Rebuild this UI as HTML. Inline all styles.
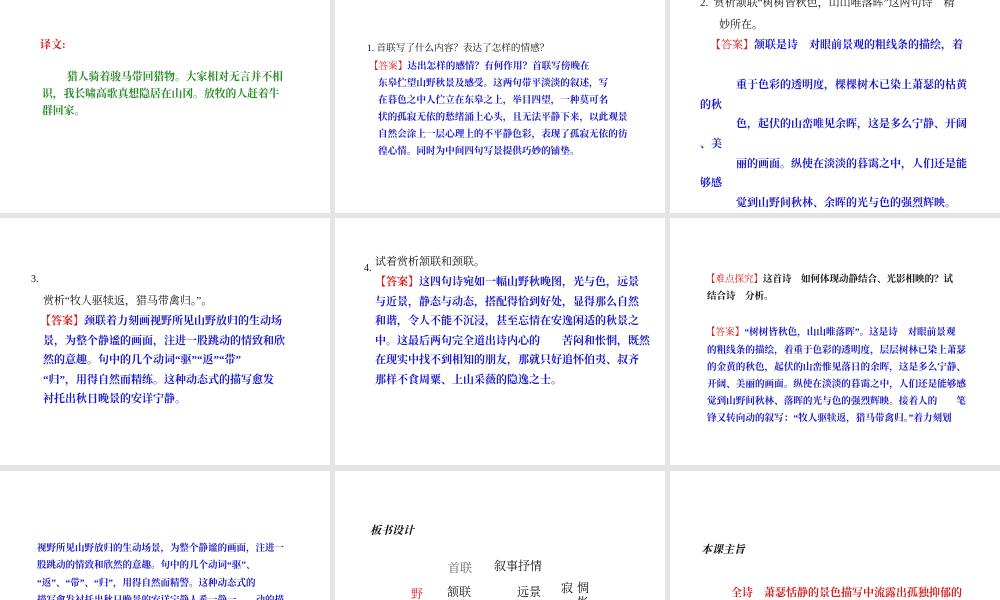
<!DOCTYPE html>
<html><head><meta charset="utf-8"><style>
*{margin:0;padding:0}
body{width:1000px;height:600px;background:#e4e4e4;position:relative;overflow:hidden;font-family:"Liberation Serif","Noto Serif CJK SC","Noto Sans CJK SC",serif;}
.p{position:absolute;background:#fff;overflow:hidden}
.t{position:absolute;white-space:nowrap}
.b{color:#1a1acc;font-weight:bold}
.r{color:#d42020}
.k{color:#111;font-weight:bold}
.g{color:#2a8a2a;font-weight:bold}
</style></head><body>
<!-- row 1 -->
<div class="p" style="left:0;top:0;width:330px;height:213px">
<div class="t r" style="left:40px;top:36px;font-size:11px;font-weight:bold">译文:</div>
<div class="t g" style="left:67px;top:69px;font-size:10.8px">猎人骑着骏马带回猎物。大家相对无言并不相</div>
<div class="t g" style="left:42px;top:86px;font-size:10.8px">识，我长啸高歌真想隐居在山冈。放牧的人赶着牛</div>
<div class="t g" style="left:42px;top:103px;font-size:10.8px">群回家。</div>
</div>
<div class="p" style="left:335px;top:0;width:330px;height:213px">
<div class="t k" style="left:32px;top:40px;font-size:9.6px;font-weight:normal">1. 首联写了什么内容？表达了怎样的情感？</div>
<div class="t b" style="left:34px;top:58px;font-size:9.6px"><span class="r" style="font-weight:normal">【答案】</span>达出怎样的感情？有何作用？首联写傍晚在</div>
<div class="t b" style="left:43px;top:75px;font-size:9.6px">东皋伫望山野秋景及感受。这两句带平淡淡的叙述，写</div>
<div class="t b" style="left:43px;top:92px;font-size:9.6px">在暮色之中人伫立在东皋之上，举目四望，一种莫可名</div>
<div class="t b" style="left:43px;top:109px;font-size:9.6px">状的孤寂无依的愁绪涌上心头，且无法平静下来，以此观景</div>
<div class="t b" style="left:43px;top:126px;font-size:9.6px">自然会涂上一层心理上的不平静色彩，表现了孤寂无依的彷</div>
<div class="t b" style="left:43px;top:143px;font-size:9.6px">徨心情。同时为中间四句写景提供巧妙的铺垫。</div>
</div>
<div class="p" style="left:670px;top:0;width:330px;height:213px">
<div class="t k" style="left:30px;top:-6px;font-size:11px;font-weight:normal">2.&nbsp; 赏析颔联“树树皆秋色，山山唯落晖”这两句诗　精</div>
<div class="t k" style="left:49px;top:16px;font-size:11px;font-weight:normal">妙所在。</div>
<div class="t b" style="left:40px;top:36px;font-size:11px"><span class="r" style="font-weight:normal">【答案】</span>颔联是诗　对眼前景观的粗线条的描绘，着</div>
<div class="t b" style="left:66px;top:76px;font-size:11px">重于色彩的透明度，棵棵树木已染上萧瑟的枯黄</div>
<div class="t b" style="left:30px;top:96px;font-size:11px">的秋</div>
<div class="t b" style="left:66px;top:115px;font-size:11px">色，起伏的山峦唯见余晖，这是多么宁静、开阔</div>
<div class="t b" style="left:30px;top:135px;font-size:11px">、美</div>
<div class="t b" style="left:66px;top:155px;font-size:11px">丽的画面。纵使在淡淡的暮霭之中，人们还是能</div>
<div class="t b" style="left:30px;top:174px;font-size:11px">够感</div>
<div class="t b" style="left:66px;top:194px;font-size:11px">觉到山野间秋林、余晖的光与色的强烈辉映。</div>
</div>
<!-- row 2 -->
<div class="p" style="left:0;top:218px;width:330px;height:247px">
<div class="t k" style="left:31px;top:56px;font-size:10px;font-weight:normal">3.</div>
<div class="t k" style="left:43px;top:74px;font-size:11px;font-weight:normal">赏析“牧人驱犊返，猎马带禽归。”。</div>
<div class="t b" style="left:40px;top:94px;font-size:11px"><span class="r">【答案】</span>颈联着力刻画视野所见山野放归的生动场</div>
<div class="t b" style="left:43px;top:114px;font-size:11px">景，为整个静谧的画面，注进一股跳动的情致和欣</div>
<div class="t b" style="left:43px;top:133px;font-size:11px">然的意趣。句中的几个动词“驱”“返”“带”</div>
<div class="t b" style="left:43px;top:153px;font-size:11px">“归”，用得自然而精练。这种动态式的描写愈发</div>
<div class="t b" style="left:43px;top:172px;font-size:11px">衬托出秋日晚景的安详宁静。</div>
</div>
<div class="p" style="left:335px;top:218px;width:330px;height:247px">
<div class="t k" style="left:40px;top:35px;font-size:11px;font-weight:normal">试着赏析颔联和颈联。</div>
<div class="t k" style="left:29px;top:45px;font-size:10px;font-weight:normal">4.</div>
<div class="t b" style="left:40px;top:55px;font-size:11px"><span class="r">【答案】</span>这四句诗宛如一幅山野秋晚图，光与色，远景</div>
<div class="t b" style="left:40px;top:75px;font-size:11px">与近景，静态与动态，搭配得恰到好处，显得那么自然</div>
<div class="t b" style="left:40px;top:94px;font-size:11px">和谐，令人不能不沉浸，甚至忘情在安逸闲适的秋景之</div>
<div class="t b" style="left:40px;top:114px;font-size:11px">中。这最后两句完全道出诗内心的　　苦闷和怅惘，既然</div>
<div class="t b" style="left:40px;top:133px;font-size:11px">在现实中找不到相知的朋友，那就只好追怀伯夷、叔齐</div>
<div class="t b" style="left:40px;top:153px;font-size:11px">那样不食周粟、上山采薇的隐逸之士。</div>
</div>
<div class="p" style="left:670px;top:218px;width:330px;height:247px">
<div class="t k" style="left:36px;top:53px;font-size:9.5px"><span class="r" style="font-weight:normal">【难点探究】</span>这首诗　如何体现动静结合、光影相映的？试</div>
<div class="t k" style="left:37px;top:70px;font-size:9.5px">结合诗　分析。</div>
<div class="t b" style="left:36px;top:106px;font-size:9.6px"><span class="r" style="font-weight:normal">【答案】</span>“树树皆秋色，山山唯落晖”。这是诗　对眼前景观</div>
<div class="t b" style="left:37px;top:124px;font-size:9.6px">的粗线条的描绘，着重于色彩的透明度，层层树林已染上萧瑟</div>
<div class="t b" style="left:37px;top:141px;font-size:9.6px">的金黄的秋色，起伏的山峦惟见落日的余晖，这是多么宁静、</div>
<div class="t b" style="left:37px;top:158px;font-size:9.6px">开阔、美丽的画面。纵使在淡淡的暮霭之中，人们还是能够感</div>
<div class="t b" style="left:37px;top:175px;font-size:9.6px">觉到山野间秋林、落晖的光与色的强烈辉映。接着人的　　笔</div>
<div class="t b" style="left:37px;top:192px;font-size:9.6px">锋又转向动的叙写：“牧人驱犊返，猎马带禽归。”着力刻划</div>
</div>
<!-- row 3 -->
<div class="p" style="left:0;top:471px;width:330px;height:129px">
<div class="t b" style="left:37px;top:69px;font-size:9.5px">视野所见山野放归的生动场景，为整个静谧的画面，注进一</div>
<div class="t b" style="left:37px;top:86px;font-size:9.5px">股跳动的情致和欣然的意趣。句中的几个动词“驱”、</div>
<div class="t b" style="left:37px;top:104px;font-size:9.5px">“返”、“带”、“归”，用得自然而精警。这种动态式的</div>
<div class="t b" style="left:37px;top:121px;font-size:9.5px">描写愈发衬托出秋日晚景的安详宁静人希一静一　　动的描</div>
</div>
<div class="p" style="left:335px;top:471px;width:330px;height:129px">
<div class="t k" style="left:35px;top:51px;font-size:11px;font-style:italic">板书设计</div>
<div class="t" style="left:113px;top:88px;font-size:12px;color:#666">首联</div>
<div class="t k" style="left:159px;top:86px;font-size:12px;font-weight:normal">叙事抒情</div>
<div class="t r" style="left:76px;top:114px;font-size:12px">野</div>
<div class="t k" style="left:112px;top:112px;font-size:12px;font-weight:normal">颔联</div>
<div class="t k" style="left:182px;top:112px;font-size:12px;font-weight:normal">远景</div>
<div class="t k" style="left:226px;top:108px;font-size:12px;font-weight:normal">寂</div>
<div class="t k" style="left:242px;top:108px;font-size:12px;font-weight:normal">惆</div>
<div class="t k" style="left:242px;top:122px;font-size:12px;font-weight:normal">怅</div>
</div>
<div class="p" style="left:670px;top:471px;width:330px;height:129px">
<div class="t k" style="left:31px;top:70px;font-size:11px;font-style:italic">本课主旨</div>
<div class="t r" style="left:61px;top:113px;font-size:11px;font-weight:bold">全诗　萧瑟恬静的景色描写中流露出孤独抑郁的</div>
</div>
</body></html>
